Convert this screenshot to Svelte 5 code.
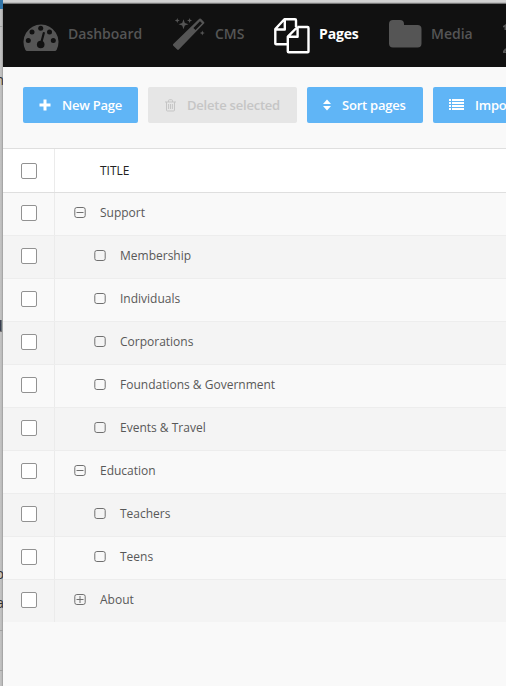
<script>
  const rows = [
    { title: 'Support', level: 0, state: 'open' },
    { title: 'Membership', level: 1 },
    { title: 'Individuals', level: 1 },
    { title: 'Corporations', level: 1 },
    { title: 'Foundations & Government', level: 1 },
    { title: 'Events & Travel', level: 1 },
    { title: 'Education', level: 0, state: 'open' },
    { title: 'Teachers', level: 1 },
    { title: 'Teens', level: 1 },
    { title: 'About', level: 0, state: 'closed' }
  ];
  const behind = [
    { text: 'n', top: 70 },
    { text: 'd', top: 317, boxed: true },
    { text: 'p', top: 564 },
    { text: 'a', top: 593 }
  ];
  const rules = [26, 630, 670];
</script>

<div class="screen">
  <div class="backdrop">
    <div class="accent"></div>
    {#each rules as y}<i class="rule" style="top:{y}px"></i>{/each}
    {#each behind as b}<span class="frag" class:boxed={b.boxed} style="top:{b.top}px">{b.text}</span>{/each}
  </div>
  <main>
    <nav>
      <a class="dash">
        <svg width="36" height="29" viewBox="0 0 36 29">
          <path fill="currentColor" d="M4 28Q3 28 2.3 26.8A17.5 17.5 0 1 1 33.7 26.8Q33 28 32 28Z" />
          <g fill="#111"><circle cx="5.3" cy="17.5" r="2.5" /><circle cx="9" cy="9" r="2.5" /><circle cx="17.7" cy="5.2" r="2.5" /><circle cx="26.5" cy="9" r="2.5" /><circle cx="30.3" cy="17.5" r="2.5" /><circle cx="17.7" cy="21.5" r="3.8" /></g>
          <path d="M18.2 20L20.8 10" stroke="#111" stroke-width="2.2" stroke-linecap="round" />
        </svg>
        <span>Dashboard</span>
      </a>
      <a class="cms">
        <svg width="33" height="34" viewBox="0 0 33 34">
          <path fill="currentColor" fill-rule="evenodd" d="M26.3.8Q27.1 0 27.9.8L31 3.9Q31.8 4.7 31 5.5L5.8 31.5Q5 32.3 4.2 31.5L.3 27.7Q-.5 26.9.3 26.1ZM27 3.2L20.4 9.9 22.5 12 29 5.3Z" />
          <g fill="currentColor"><path d="M10.5 1.3L11.8 5 15.5 6.3 11.8 7.6 10.5 11.3 9.2 7.6 5.5 6.3 9.2 5Z" /><path d="M4.3 0L5 1.8 6.8 2.5 5 3.2 4.3 5 3.6 3.2 1.8 2.5 3.6 1.8Z" /><path d="M16.6 0L17.3 1.8 19.1 2.5 17.3 3.2 16.6 5 15.9 3.2 14.1 2.5 15.9 1.8Z" /><path d="M29.3 12.5L30 14.3 31.8 15 30 15.7 29.3 17.5 28.6 15.7 26.8 15 28.6 14.3Z" /></g>
        </svg>
        <span>CMS</span>
      </a>
      <a class="pages">
        <svg width="36" height="36" viewBox="0 0 36 36" fill="none" stroke="currentColor" stroke-width="2.4" stroke-linejoin="round">
          <path d="M13.5 26.3H2.2Q1.3 26.3 1.3 25.4V11L10.4 1.3H21Q22 1.3 22 2.3V9M10.8 1.5V11.5H1.3M23.4 9H33.6Q34.5 9 34.5 9.9V33.4Q34.5 34.3 33.6 34.3H14.7Q13.8 34.3 13.8 33.4V18.7L23.4 9M23.6 9.2V18.8H14" />
        </svg>
        <span>Pages</span>
      </a>
      <a class="media">
        <svg width="33" height="28" viewBox="0 0 33 28"><path fill="currentColor" d="M4 0H11Q15 0 15 4V5H28.5Q32.5 5 32.5 9V23.5Q32.5 27.5 28.5 27.5H4Q0 27.5 0 23.5V4Q0 0 4 0Z" /></svg>
        <span>Media</span>
      </a>
      <a class="more">
        <svg width="34" height="32" viewBox="0 0 34 32" fill="currentColor"><path d="M0 2L3 0V6H1.5V3L0 3.5ZM0 27L2 24.5H4V26L2 27.5H4V29H0Z" /></svg>
      </a>
    </nav>

    <div class="toolbar">
      <button style="width:115px">
        <svg class="i-plus" width="12" height="12" viewBox="0 0 12 12"><path fill="currentColor" d="M4.5.5h3v4h4v3h-4v4h-3v-4h-4v-3h4z" /></svg>
        <span>New Page</span>
      </button>
      <button class="disabled" style="width:149px">
        <svg class="i-trash" width="11" height="13" viewBox="0 0 11 13" fill="none" stroke="currentColor"><path d="M0 3H11M3.5 3V1.8Q3.5.7 4.5.7H6.5Q7.5.7 7.5 1.8V3M1.5 3V11Q1.5 12 2.5 12H8.5Q9.5 12 9.5 11V3M3.6 5V10M5.5 5V10M7.4 5V10" /></svg>
        <span>Delete selected</span>
      </button>
      <button style="width:116px">
        <svg class="i-sort" width="8" height="12" viewBox="0 0 8 12" fill="currentColor"><path d="M0 5L4 .5 8 5ZM0 7H8L4 11.5Z" /></svg>
        <span>Sort pages</span>
      </button>
      <button style="width:140px">
        <svg class="i-list" width="15" height="12" viewBox="0 0 15 12" fill="currentColor"><path d="M0 0h2v2H0zM3 0h12v2H3zM0 3h2v2H0zM3 3h12v2H3zM0 6h2v2H0zM3 6h12v2H3zM0 9h2v2H0zM3 9h12v2H3z" /></svg>
        <span>Import pages</span>
      </button>
    </div>

    <div class="row head">
      <div class="check"><i></i></div>
      <div class="cell"><span>TITLE</span></div>
    </div>
    {#each rows as row, n}
      <div class="row" class:alt={n % 2 === 1}>
        <div class="check"><i></i></div>
        <div class="cell" class:child={row.level === 1}>
          <svg width="12" height="12" viewBox="0 0 12 12" fill="none" stroke="#707070">
            <rect x=".8" y=".5" width="10.4" height="10" rx="2" />
            {#if row.state}<path d="M2.5 5.5H9.5" />{/if}
            {#if row.state === 'closed'}<path d="M6 2V9" />{/if}
          </svg>
          <span>{row.title}</span>
        </div>
      </div>
    {/each}
  </main>
</div>

<style>
  :global(body) { overflow: hidden; }
  .screen { position: relative; width: 506px; height: 686px; overflow: hidden; background: #d2d2d2; font-family: 'Open Sans', sans-serif; display: flex; box-sizing: border-box; padding-top: 3px; }
  .backdrop { position: absolute; left: 0; top: 0; width: 3px; height: 686px; overflow: hidden; background: linear-gradient(90deg, #c5c5c5, #b9b9b9 65%, #969696); }
  .accent { height: 9px; background: #3275a8; }
  .rule { position: absolute; left: 0; width: 3px; height: 1px; background: #a0a0a0; }
  .frag { position: absolute; right: -1px; font-size: 14px; line-height: 20px; color: #333; }
  .boxed { background: #777; line-height: 12px; margin-top: 3px; right: 1px; }
  main { margin-left: 3px; width: 503px; flex: none; background: #f9f9f9; overflow: hidden; box-shadow: 0 0 1px #555; }
  nav { display: flex; height: 64px; background: #111; border-top: 1px solid #777; box-sizing: border-box; padding-left: 20px; color: #555; }
  nav a { display: flex; align-items: flex-start; flex: none; }
  nav svg { flex: none; }
  nav span { font-size: 14px; font-weight: 600; line-height: 20px; margin-top: 20px; white-space: nowrap; }
  .dash { width: 150px; }
  .dash svg { margin-top: 19px; margin-right: 9px; }
  .cms { width: 101px; }
  .cms svg { margin-top: 14px; margin-right: 9px; }
  .pages { width: 115px; color: #fff; }
  .pages svg { margin-top: 14px; margin-right: 9px; }
  .pages span { font-weight: 700; letter-spacing: -0.15px; }
  .media { width: 114px; }
  .media svg { margin-top: 16px; margin-right: 9px; }
  .more svg { margin-top: 20px; }
  .toolbar { height: 81px; box-sizing: border-box; padding: 20px 0 0 20px; display: flex; gap: 10px; align-items: flex-start; }
  button { flex: none; height: 36px; border: 0; border-radius: 2px; background: #60b5f6; color: #fff; font: 600 13px/20px 'Open Sans', sans-serif; letter-spacing: -0.22px; display: flex; align-items: center; padding: 0 0 0 16px; white-space: nowrap; }
  button.disabled { background: #e6e6e6; color: #c5c5c5; }
  .i-plus { margin-right: 11px; }
  .i-trash { margin: 0 11px 0 1px; }
  .i-sort { margin-right: 11px; }
  .i-list { margin-right: 11px; }
  .row { display: flex; height: 43px; box-sizing: border-box; border-top: 1px solid #ededed; color: #585858; font-size: 12px; }
  .alt { background: #f4f4f4; }
  .head { height: 44px; background: #fff; color: #222; border-top-color: #dfdfdf; }
  .head + .row { border-top-color: #dfdfdf; }
  .check { width: 52px; flex: none; box-sizing: border-box; border-right: 1px solid #ebebeb; padding: 12px 0 0 18px; }
  .head .check { padding-top: 14px; }
  .check i { display: block; width: 16px; height: 16px; box-sizing: border-box; border: 1px solid #929292; border-radius: 2px; background: #fff; }
  .cell { display: flex; align-items: flex-start; padding: 14px 0 0 19px; }
  .cell span { line-height: 12px; white-space: nowrap; }
  .cell svg { margin-right: 14px; flex: none; }
  .child { padding-left: 39px; }
  .head .cell { padding: 16px 0 0 45px; }
</style>
